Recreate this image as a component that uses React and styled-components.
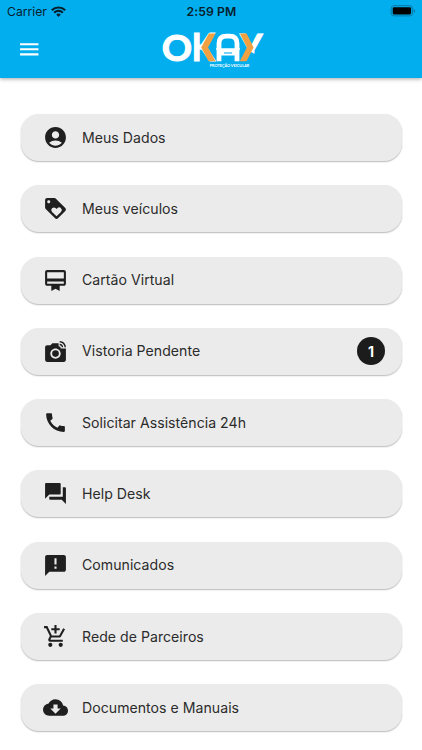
import styled, { createGlobalStyle } from "styled-components"
import {
  MdAccountCircle,
  MdLoyalty,
  MdCardMembership,
  MdLinkedCamera,
  MdCall,
  MdForum,
  MdAnnouncement,
  MdAddShoppingCart,
  MdCloudDownload,
  MdMenu,
} from "react-icons/md"

const GlobalStyle = createGlobalStyle`
    * {
        box-sizing: border-box;
    }
    body {
        margin: 0;
        background-color: #fff;
        font-family: Inter, Roboto, sans-serif;
        overflow: hidden;
    }
`

const Container = styled.div`
    height: 750px;
    overflow: hidden;
`

const Header = styled.header`
    height: 77.5px;
    background-color: #03aeef;
    box-shadow: 0 1px 4px rgba(0, 0, 0, 0.35);
`

const StatusBar = styled.div`
    display: grid;
    grid-template-columns: 1fr auto 1fr;
    align-items: center;
    height: 22px;
    padding: 0 6px 0 7px;
    color: #06202c;
`

const Carrier = styled.div`
    display: flex;
    align-items: center;
    gap: 4px;
    font-size: 12.2px;
`

const Time = styled.div`
    font-size: 12.2px;
    font-weight: 600;
    letter-spacing: 0.1px;
`

const Battery = styled.svg`
    justify-self: end;
`

const Toolbar = styled.div`
    display: grid;
    grid-template-columns: 1fr auto 1fr;
    align-items: center;
    height: 55px;
    padding: 0 13px 0 16.5px;
`

const MenuButton = styled.button`
    display: flex;
    width: 25px;
    padding: 0;
    border: none;
    background: none;
    color: #fff;
    font-size: 24.5px;
`

const Menu = styled.nav`
    display: flex;
    flex-direction: column;
    gap: 24.3px;
    padding: 36.5px 20.5px 0 20.5px;
`

const MenuItem = styled.a`
    display: flex;
    align-items: center;
    flex-shrink: 0;
    height: 47px;
    padding: 0 16.5px 0 22px;
    border-radius: 18px;
    background-color: #ebebeb;
    box-shadow: 0 1px 1.5px rgba(0, 0, 0, 0.28);
    color: #1f1f1f;
`

const ItemIcon = styled.span`
    display: flex;
    margin-right: 14.5px;
    font-size: 25px;
`

const ItemText = styled.span`
    flex: 1;
    font-size: 14.1px;
    line-height: 18px;
    letter-spacing: 0.03px;
    color: #2b2b2b;
`

const Badge = styled.span`
    display: flex;
    align-items: center;
    justify-content: center;
    width: 28px;
    height: 28px;
    border-radius: 50%;
    background-color: #1c1c1c;
    color: #fff;
    font-size: 14px;
    font-weight: 700;
`

const items = [
  { text: "Meus Dados", icon: MdAccountCircle },
  { text: "Meus veículos", icon: MdLoyalty },
  { text: "Cartão Virtual", icon: MdCardMembership },
  { text: "Vistoria Pendente", icon: MdLinkedCamera, badge: 1 },
  { text: "Solicitar Assistência 24h", icon: MdCall },
  { text: "Help Desk", icon: MdForum },
  { text: "Comunicados", icon: MdAnnouncement },
  { text: "Rede de Parceiros", icon: MdAddShoppingCart },
  { text: "Documentos e Manuais", icon: MdCloudDownload },
]

const LogoSvg = styled.svg`
    overflow: visible;
`

const LogoText = styled.text`
    font-family: Lato, sans-serif;
    font-size: ${props => props.$size}px;
    font-weight: 700;
    fill: #fff;
`

const Chevron = styled.polyline`
    fill: none;
    stroke: #f2a142;
    stroke-width: 6;
    stroke-linejoin: miter;
`

const Logo = () => (
  <LogoSvg width="102" height="38" viewBox="162 31 102 38">
    <defs>
      <clipPath id="top">
        <path d="M238 33.6h30v20h-14l-16-8z" />
      </clipPath>
      <clipPath id="band">
        <path d="M190 33.6h80v27.7h-80z" />
      </clipPath>
    </defs>
    <LogoText $size={37} x="161.8" y="60.6" textLength="30.4" lengthAdjust="spacingAndGlyphs" stroke="#fff" strokeWidth="1">O</LogoText>
    <LogoText $size={37.5} x="191.8" y="60.8" textLength="23" lengthAdjust="spacingAndGlyphs" stroke="#fff" strokeWidth="1.2">K</LogoText>
    <g clipPath="url(#top)">
      <LogoText $size={38} x="239.6" y="61.2" textLength="23.6" lengthAdjust="spacingAndGlyphs" stroke="#fff" strokeWidth="1">Y</LogoText>
    </g>
    <g clipPath="url(#band)">
      <Chevron points="214,30 204.6,47.5 214,65" />
      <Chevron points="241.5,30 250.2,47.5 241.2,65" />
    </g>
    {/* car under its arch */}
    <path d="M219 61.3V43.5q0-7.3 7.3-7.3h3.4q7.3 0 7.3 7.3v17.8" fill="none" stroke="#fff" strokeWidth="4.8" />
    <path d="M219 49h18v6.5h-18z" fill="#fff" />
    <path d="M216 49h24" stroke="#fff" strokeWidth="1.5" />
    <path d="M224 53h8" stroke="#03aeef" strokeWidth="1.1" />
    <LogoText $size={4.4} x="209.7" y="66.8" textLength="39.6" lengthAdjust="spacingAndGlyphs">PROTEÇÃO VEICULAR</LogoText>
  </LogoSvg>
)

const App = () => {
  return (
    <>
      <GlobalStyle />
      <Container>
        <Header>
          <StatusBar>
            <Carrier>
              Carrier
              <svg width="15" height="11" viewBox="0 0 15 11" fill="none" stroke="currentColor" strokeWidth="2.2">
                <path d="M0.8 4.2a9.6 9.6 0 0 1 13.4 0M3.2 6.7a6.2 6.2 0 0 1 8.6 0" />
                <path d="M7.5 11L5.2 8.6a3.3 3.3 0 0 1 4.6 0z" fill="currentColor" stroke="none" />
              </svg>
            </Carrier>
            <Time>2:59 PM</Time>
            <Battery width="26" height="12" viewBox="0 0 26 12">
              <rect x="1.2" y="0.7" width="21.4" height="10.2" rx="2.8" fill="none" stroke="#0679a6" />
              <rect x="2.7" y="2.2" width="18.4" height="7.2" rx="1.3" fill="#000" />
              <path d="M23.8 4v4a2.2 2.2 0 0 0 0-4z" fill="#0679a6" />
            </Battery>
          </StatusBar>
          <Toolbar>
            <MenuButton><MdMenu /></MenuButton>
            <Logo />
          </Toolbar>
        </Header>
        <Menu>
          {items.map(({ text, icon: Icon, badge }) => (
            <MenuItem key={text}>
              <ItemIcon><Icon /></ItemIcon>
              <ItemText>{text}</ItemText>
              {badge && <Badge>{badge}</Badge>}
            </MenuItem>
          ))}
        </Menu>
      </Container>
    </>
  )
}

export default App
